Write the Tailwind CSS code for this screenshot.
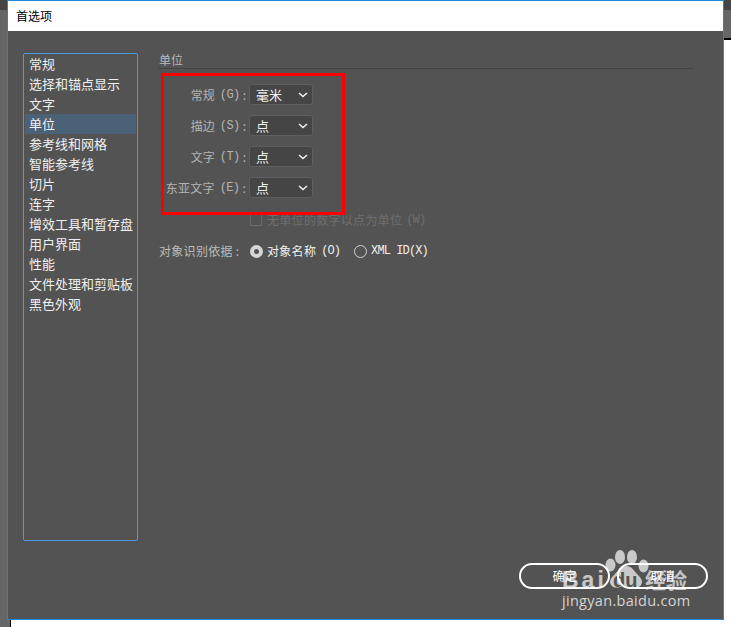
<!DOCTYPE html>
<html lang="zh">
<head>
<meta charset="utf-8">
<script src="https://cdn.jsdelivr.net/npm/@tailwindcss/browser@4"></script>
</head>
<body class="bg-white">
<div class="relative w-[731px] h-[627px] overflow-hidden bg-white font-['Noto_Sans_CJK_SC','Liberation_Sans',sans-serif]">
  <!-- desktop behind the dialog -->
  <div class="absolute left-0 top-0 w-[10px] h-[627px] bg-[#666666]"></div>
  <div class="absolute left-0 top-0 w-[10px] h-[10px] bg-[#444444]"></div>
  <div class="absolute left-[10px] top-[620px] w-px h-[7px] bg-black"></div>
  <div class="absolute left-[724px] top-0 w-[7px] h-[10px] bg-[#444444]"></div>
  <div class="absolute left-[724px] top-[10px] w-[7px] h-[28px] bg-[#666666]"></div>
  <div class="absolute left-[724px] top-[38px] w-[7px] h-[2px] bg-black"></div>

  <!-- dialog -->
  <div class="absolute left-[7px] top-0 w-[717px] h-[620px] flex flex-col border border-[#1e88dc] bg-[#535353]">
    <div class="h-[30px] bg-white flex items-center pl-2 text-xs text-black">首选项</div>

    <div class="flex h-[510px] pt-[22px] pl-[15px]">
      <!-- category list -->
      <div class="w-[115px] h-[488px] border border-[#4a9be4] rounded-[2px] px-px text-[13px] leading-5 text-[#f0f0f0]">
        <div class="pl-[4px]">常规</div>
        <div class="pl-[4px]">选择和锚点显示</div>
        <div class="pl-[4px]">文字</div>
        <div class="pl-[4px] bg-[#4b6178]">单位</div>
        <div class="pl-[4px]">参考线和网格</div>
        <div class="pl-[4px]">智能参考线</div>
        <div class="pl-[4px]">切片</div>
        <div class="pl-[4px]">连字</div>
        <div class="pl-[4px]">增效工具和暂存盘</div>
        <div class="pl-[4px]">用户界面</div>
        <div class="pl-[4px]">性能</div>
        <div class="pl-[4px]">文件处理和剪贴板</div>
        <div class="pl-[4px]">黑色外观</div>
      </div>

      <!-- units pane -->
      <div class="ml-[20px] w-[535px] flex flex-col">
        <div class="h-4 border-b border-[#434343] pl-px text-xs leading-[13px] text-[#b8b8b8]">单位</div>

        <div class="mt-[15px] flex flex-col gap-[10px] pl-[4px] text-xs text-[#b4b4b4]">
          <div class="flex items-center h-[21px]">
            <div class="w-[87px] flex justify-end items-center pr-[3px] whitespace-nowrap">常规<span class="ml-[5px] text-xs tracking-[-0.6px] font-['Liberation_Mono',monospace]">(G)</span><span class="ml-[3px]">:</span></div>
            <div class="w-16 h-[21px] flex items-center justify-between pl-[6px] pr-[4px] rounded-[3px] border border-[#5e5e5e] bg-[#454545] text-[13px] text-[#f0f0f0]">毫米<svg width="10" height="6" viewBox="0 0 10 6" fill="none" stroke="#f0f0f0" stroke-width="1.6"><path d="M1 1l4 3.5L9 1"/></svg></div>
          </div>
          <div class="flex items-center h-[21px]">
            <div class="w-[87px] flex justify-end items-center pr-[3px] whitespace-nowrap">描边<span class="ml-[5px] text-xs tracking-[-0.6px] font-['Liberation_Mono',monospace]">(S)</span><span class="ml-[3px]">:</span></div>
            <div class="w-16 h-[21px] flex items-center justify-between pl-[6px] pr-[4px] rounded-[3px] border border-[#5e5e5e] bg-[#454545] text-[13px] text-[#f0f0f0]">点<svg width="10" height="6" viewBox="0 0 10 6" fill="none" stroke="#f0f0f0" stroke-width="1.6"><path d="M1 1l4 3.5L9 1"/></svg></div>
          </div>
          <div class="flex items-center h-[21px]">
            <div class="w-[87px] flex justify-end items-center pr-[3px] whitespace-nowrap">文字<span class="ml-[5px] text-xs tracking-[-0.6px] font-['Liberation_Mono',monospace]">(T)</span><span class="ml-[3px]">:</span></div>
            <div class="w-16 h-[21px] flex items-center justify-between pl-[6px] pr-[4px] rounded-[3px] border border-[#5e5e5e] bg-[#454545] text-[13px] text-[#f0f0f0]">点<svg width="10" height="6" viewBox="0 0 10 6" fill="none" stroke="#f0f0f0" stroke-width="1.6"><path d="M1 1l4 3.5L9 1"/></svg></div>
          </div>
          <div class="flex items-center h-[21px]">
            <div class="w-[87px] flex justify-end items-center pr-[3px] whitespace-nowrap tracking-[0.2px]">东亚文字<span class="ml-[5px] text-xs tracking-[-0.6px] font-['Liberation_Mono',monospace]">(E)</span><span class="ml-[3px]">:</span></div>
            <div class="w-16 h-[21px] flex items-center justify-between pl-[6px] pr-[4px] rounded-[3px] border border-[#5e5e5e] bg-[#454545] text-[13px] text-[#f0f0f0]">点<svg width="10" height="6" viewBox="0 0 10 6" fill="none" stroke="#f0f0f0" stroke-width="1.6"><path d="M1 1l4 3.5L9 1"/></svg></div>
          </div>
        </div>

        <div class="mt-[16px] ml-[92px] flex items-center h-[12px] text-xs text-[#6f6f6f] whitespace-nowrap">
          <span class="w-3 h-3 border border-[#6c6c6c] rounded-[1px]"></span>
          <span class="ml-[5px] tracking-[0.3px]">无单位的数字以点为单位</span>
          <span class="ml-[4px] text-xs tracking-[-0.9px] font-['Liberation_Mono',monospace]">(W)</span>
        </div>

        <div class="mt-[18px] pl-px flex items-center h-[14px] text-xs whitespace-nowrap">
          <span class="text-[#bcbcbc] w-[91px] tracking-[0.3px]">对象识别依据 :</span>
          <span class="w-[13px] h-[13px] rounded-full bg-[#d6d6d6] flex items-center justify-center"><span class="w-[5px] h-[5px] rounded-full bg-[#535353]"></span></span>
          <span class="ml-[4px] text-[#f0f0f0] tracking-[0.3px]">对象名称</span>
          <span class="ml-[5px] text-xs tracking-[-0.9px] text-[#f0f0f0] font-['Liberation_Mono',monospace]">(O)</span>
          <span class="ml-[14px] w-[13px] h-[13px] rounded-full border border-[#d0d0d0]"></span>
          <span class="ml-[4px] text-xs tracking-[-0.9px] text-[#f0f0f0] font-['Liberation_Mono',monospace]">XML ID(X)</span>
        </div>
      </div>
    </div>

    <!-- buttons -->
    <div class="mt-[22px] flex justify-end gap-[7px] pr-[15px]">
      <div class="relative z-10 w-[91px] h-[26px] rounded-full border-2 border-white flex items-center justify-center text-xs text-white">确定</div>
      <div class="relative z-10 w-[91px] h-[26px] rounded-full border-2 border-white flex items-center justify-center text-xs text-white">取消</div>
    </div>
  </div>

  <!-- red annotation -->
  <div class="absolute left-[161px] top-[73px] w-[184px] h-[142px] border-[3px] border-[#ff0000]"></div>

  <!-- watermark -->
  <svg class="absolute left-[601px] top-[544px]" width="55" height="50" viewBox="0 0 55 50" fill="#c9c9c9">
    <ellipse cx="19" cy="13" rx="5" ry="7"/>
    <ellipse cx="31" cy="13" rx="5" ry="7"/>
    <ellipse cx="9.500" cy="21" rx="5" ry="6.500"/>
    <ellipse cx="42.500" cy="22" rx="5" ry="6.500"/>
    <path d="M25 22c6 0 8 5 12 9 4 4 5 7 3 10-2 3-6 3-9 2-4-1-8-1-12 0-3 1-7 1-9-2-2-3-1-6 3-10 4-4 6-9 12-9z"/>
  </svg>
  <div class="absolute left-[562px] top-[568px] text-[23px] leading-[24px] tracking-[3px] font-bold text-[#c9c9c9] font-['Liberation_Sans',sans-serif]">Bai</div>
  <div class="absolute left-[613px] top-[569px] text-[20px] leading-[22px] font-bold text-[#535353] font-['Liberation_Sans',sans-serif]">du</div>
  <div class="absolute left-[645px] top-[566px] text-[21px] leading-[26px] font-bold text-[#c4c4c4]">经验</div>
  <div class="absolute left-[562px] top-[592px] text-[14.500px] leading-[18px] tracking-[0.3px] text-[#d4d4d4] font-['Open_Sans',sans-serif]">jingyan.baidu.com</div>
</div>
</body>
</html>
